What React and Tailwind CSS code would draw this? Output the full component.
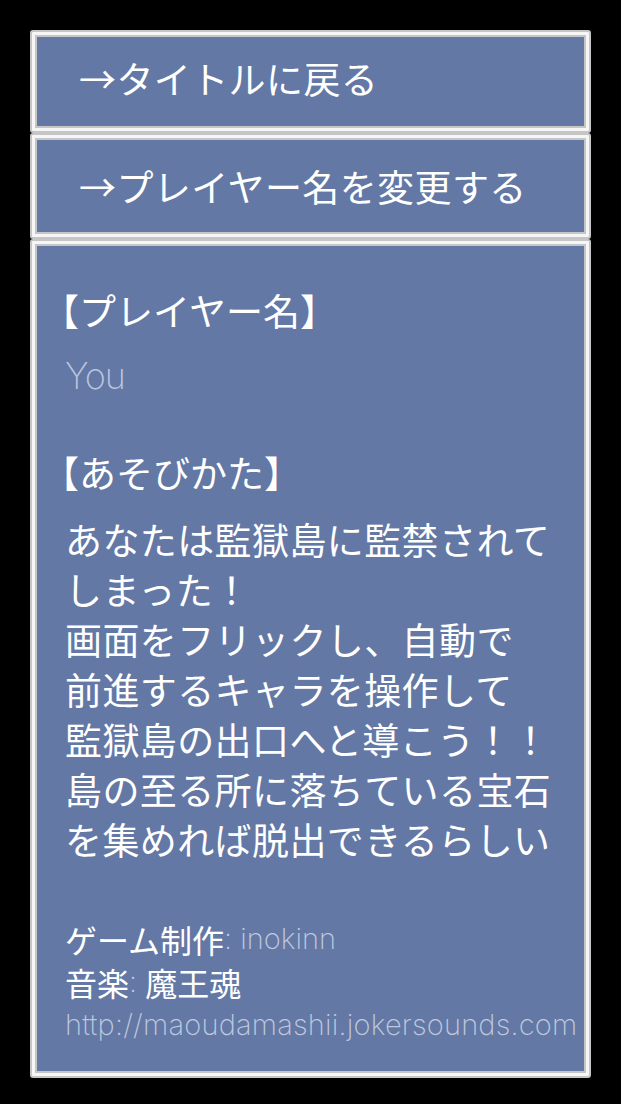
const Frame = ({ className = "", children }) => (
  <div className="rounded-[3px] border-2 border-[#c6c6c6] bg-[#f6f6f6] p-[3px]">
    <div className={`border-2 border-[#c6c6c6] bg-[#6378a5] ${className}`}>{children}</div>
  </div>
);

const MenuButton = ({ label, className }) => (
  <Frame className={`flex items-center pl-[42px] ${className}`}>
    <span className="text-[37px] leading-none tracking-[0.4px] text-white">→{label}</span>
  </Frame>
);

const bodyLines = [
  "あなたは監獄島に監禁されて",
  "しまった！",
  "画面をフリックし、自動で",
  "前進するキャラを操作して",
  "監獄島の出口へと導こう！！",
  "島の至る所に落ちている宝石",
  "を集めれば脱出できるらしい",
];

export default function App() {
  return (
    <div className="min-h-[1104px] w-[621px] bg-black px-[30px] pt-[30px] font-['Noto_Sans_CJK_JP','Noto_Sans',sans-serif]">
      <div className="flex flex-col">
        <MenuButton label="タイトルに戻る" className="h-[93px] pb-[6px]" />
        <MenuButton label="プレイヤー名を変更する" className="h-[96px]" />

        {/* ルール説明 */}
        <Frame className="h-[829px] pl-[26px] pt-[44px]">
          <div className="-ml-[21px] text-[37px] leading-[40px] text-white">【プレイヤー名】</div>
          <div className="mt-[24px] pl-[2px] font-['Inter',sans-serif] text-[36px] font-extralight leading-[44px] tracking-[-1px] text-[#bcc5dd]">
            You
          </div>

          <div className="-ml-[21px] mt-[54px] text-[37px] leading-[40px] text-white">【あそびかた】</div>
          <div className="mt-[22px] pl-[2px] text-[37px] leading-[50px] tracking-[0.4px] text-white">
            {bodyLines.map((line) => (
              <div key={line} className="whitespace-nowrap">
                {line}
              </div>
            ))}
          </div>

          <div className="mt-[54px] pl-[2px] text-[32px] text-white">
            <div className="flex h-[42px] items-center whitespace-nowrap">
              <span>ゲーム制作</span>
              <span className="font-['Inter',sans-serif] text-[29px] font-extralight text-[#bfc8de]">: inokinn</span>
            </div>
            <div className="flex h-[43px] items-center whitespace-nowrap">
              <span>音楽</span>
              <span className="font-['Inter',sans-serif] text-[29px] font-extralight text-[#bfc8de]">:&nbsp;</span>
              <span>魔王魂</span>
            </div>
            <div className="flex h-[43px] items-center whitespace-nowrap font-['Inter',sans-serif] text-[29px] font-extralight tracking-[0.2px] text-[#bfc8de]">
              http://maoudamashii.jokersounds.com
            </div>
          </div>
        </Frame>
      </div>
    </div>
  );
}
